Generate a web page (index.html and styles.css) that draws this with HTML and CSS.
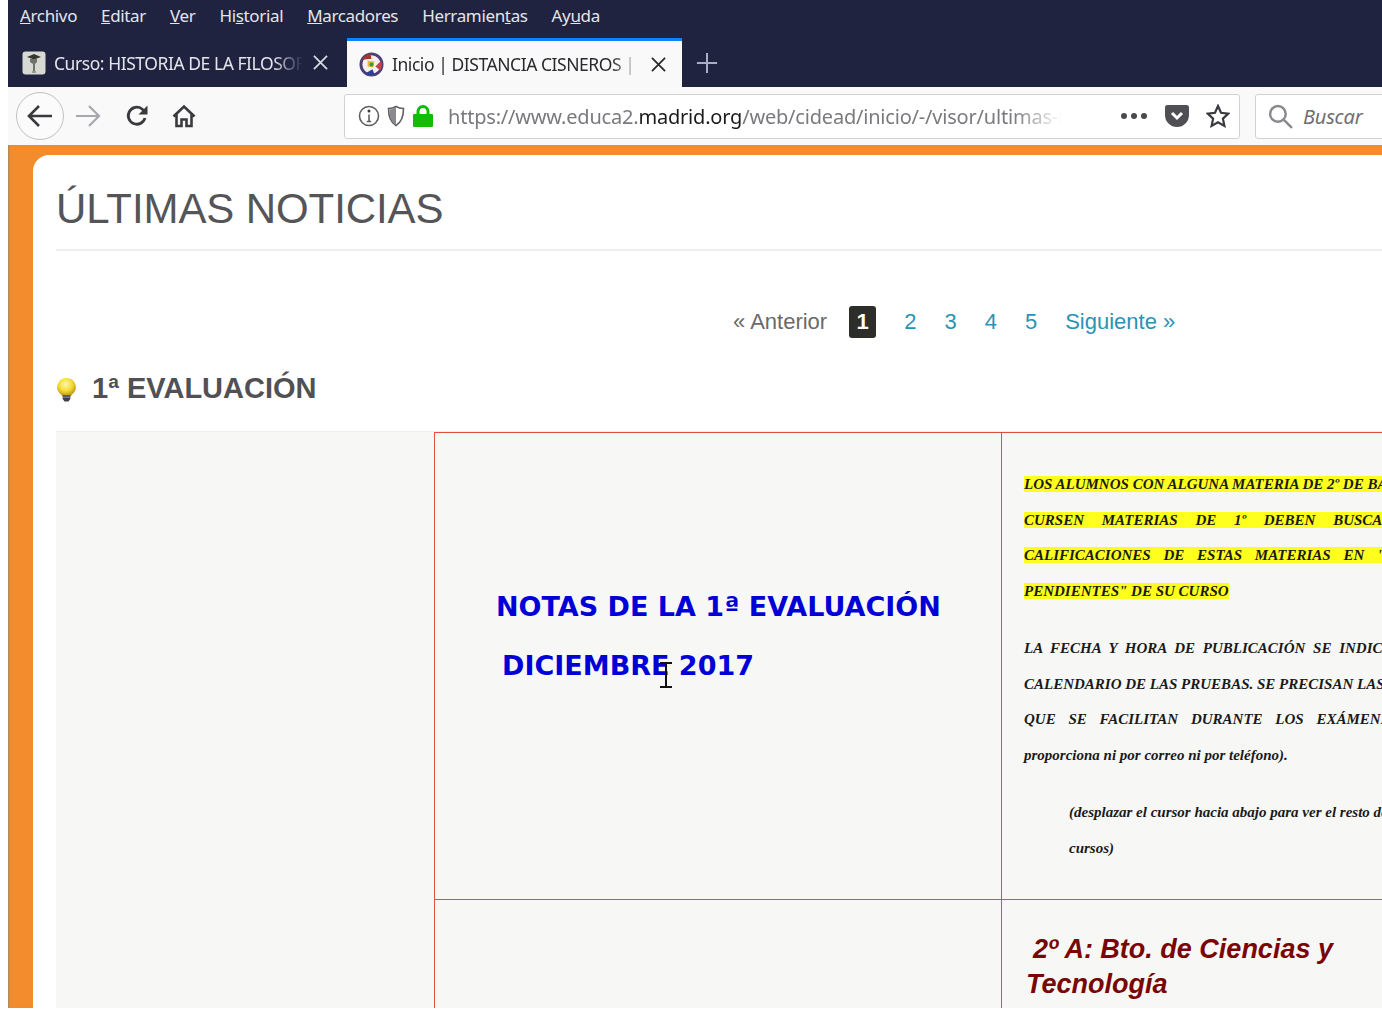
FILE: index.html
```html
<!DOCTYPE html>
<html lang="es">
<head>
<meta charset="utf-8">
<title>Inicio | DISTANCIA CISNEROS</title>
<link rel="stylesheet" href="styles.css">
</head>
<body>
<div class="window">
  <div class="menubar">
    <span><u>A</u>rchivo</span><span><u>E</u>ditar</span><span><u>V</u>er</span><span>Hi<u>s</u>torial</span><span><u>M</u>arcadores</span><span>Herramien<u>t</u>as</span><span>Ay<u>u</u>da</span>
  </div>
  <div class="tabbar">
    <div class="tab">
      <svg class="favicon" viewBox="0 0 24 24"><rect x="0.5" y="0.5" width="23" height="23" rx="3" fill="#d9d9d4"/><path d="M5 6l7-3 7 3-7 2.5z" fill="#33382f"/><path d="M8 8h7v3l-2 2v7h-2v-7l-3-2z" fill="#6f746a"/><path d="M10 20h4v2h-4z" fill="#9a9c94"/></svg>
      <span class="tab-title tab-title-a">Curso: HISTORIA DE LA FILOSOFÍA</span>
      <svg class="tab-close light" viewBox="0 0 16 16"><path d="M1 1l14 14M15 1L1 15"/></svg>
    </div>
    <div class="tab active">
      <svg class="favicon round" viewBox="0 0 26 26"><circle cx="13" cy="13" r="11" fill="#f5f0ee" stroke="#4b3f78" stroke-width="3"/><path d="M3 8a11 11 0 0 1 9-6l1 5z" fill="#a5342e"/><path d="M23 9a11 11 0 0 1-1 10l-5-4z" fill="#c9404a"/><path d="M7 22a11 11 0 0 0 9 1l-2-5z" fill="#2b3f9c"/><path d="M9 9l7 1-1 6-6-1z" fill="#e2b93a"/><circle cx="13" cy="13" r="2" fill="#3f8f58"/></svg>
      <span class="tab-title tab-title-b">Inicio | DISTANCIA CISNEROS | IES</span>
      <svg class="tab-close" viewBox="0 0 16 16"><path d="M1 1l14 14M15 1L1 15"/></svg>
    </div>
    <svg class="new-tab" viewBox="0 0 24 24"><path d="M12 1v22M1 12h22"/></svg>
  </div>
  <div class="navbar">
    <div class="back-btn"><svg class="ico-24" viewBox="0 0 26 24"><path d="M25 12H2M12 2L2 12l10 10"/></svg></div>
    <svg class="ico-fwd" viewBox="0 0 26 24"><path d="M1 12h23M14 2l10 10-10 10"/></svg>
    <svg class="ico-reload" viewBox="0 0 24 24"><path d="M20 14a8.500 8.500 0 1 1-3-9l3 2.500"/><path class="fill" d="M22.500 1.500v9h-9z"/></svg>
    <svg class="ico-home" viewBox="0 0 24 24"><path d="M1.500 12.500L12 2.500l10.500 10M4.500 10.500V22h5v-6.500h5V22h5V10.500"/></svg>
    <div class="urlbar">
      <svg class="ico-info" viewBox="0 0 22 22"><circle cx="11" cy="11" r="9.500"/><path d="M11 9.500V17M8.800 16.500h4.400" /><circle class="fill" cx="11" cy="6" r="1.500"/></svg>
      <svg class="ico-shield" viewBox="0 0 18 22"><path d="M9 1.500c2.500 1.500 5 2 7.500 2 0 8-1.500 13.500-7.500 17-6-3.500-7.500-9-7.500-17 2.500 0 5-.5 7.500-2z"/><path class="fill-g" d="M9 2v18c-5-3-6.500-8-6.500-15.500 2.500 0 4.500-1 6.500-2.500z"/></svg>
      <svg class="ico-lock" viewBox="0 0 20 22"><path class="lock-g" d="M1 9h18a1 1 0 0 1 1 1v11a1 1 0 0 1-1 1H1a1 1 0 0 1-1-1V10a1 1 0 0 1 1-1z"/><path class="lock-s" d="M5 10V6.500a5 5 0 0 1 10 0V10"/></svg>
      <span class="url">https://www.educa2.<b>madrid.org</b>/web/cidead/inicio/-/visor/ultimas-noticias</span>
      <span class="dots"><i></i><i></i><i></i></span>
      <svg class="ico-pocket" viewBox="0 0 24 22"><path class="fill-d" d="M2.500 0h19A2.500 2.500 0 0 1 24 2.500V10a12 12 0 0 1-24 0V2.500A2.500 2.500 0 0 1 2.500 0z"/><path class="chev" d="M7 8l5 5 5-5"/></svg>
      <svg class="ico-star" viewBox="0 0 24 24"><path d="M12 2l3 6.800 7.300.8-5.400 5 1.500 7.300L12 18.300l-6.400 3.600 1.500-7.300-5.400-5 7.300-.8z"/></svg>
    </div>
    <div class="searchbar">
      <svg class="ico-search" viewBox="0 0 24 24"><circle cx="9.500" cy="9.500" r="7.500"/><path d="M15 15l8 8"/></svg>
      <span class="search-text">Buscar</span>
    </div>
  </div>
  <div class="page">
    <div class="card">
      <h1 class="title">ÚLTIMAS NOTICIAS</h1>
      <div class="pagination">
        <span class="pg-prev">« Anterior</span>
        <span class="pg-cur">1</span>
        <a class="pg-link">2</a><a class="pg-link">3</a><a class="pg-link">4</a><a class="pg-link">5</a>
        <a class="pg-next">Siguiente »</a>
      </div>
      <h2 class="section">
        <svg class="bulb" viewBox="0 0 22 26"><defs><radialGradient id="b" cx="45%" cy="35%" r="60%"><stop offset="0" stop-color="#fff7a8"/><stop offset=".6" stop-color="#f4dc35"/><stop offset="1" stop-color="#c99f14"/></radialGradient></defs><path d="M11 1a9.500 9.500 0 0 1 6 17l-1.500 2h-9L5 18A9.500 9.500 0 0 1 11 1z" fill="url(#b)"/><path d="M7 19h8v4l-2 2.500H9L7 23z" fill="#3c4148"/><path d="M7 21h8" stroke="#9ba1a8"/></svg>
        <span>1ª EVALUACIÓN</span>
      </h2>
      <div class="grid">
        <div class="cell side"></div>
        <div class="cell notes">
          <p class="notes-line">NOTAS DE LA 1ª EVALUACIÓN</p>
          <p class="notes-line second">DICIEMBRE 2017</p>
          <svg class="ibeam" viewBox="0 0 14 26"><path d="M1 1h12M7 1v24M1 25h12"/></svg>
        </div>
        <div class="cell info">
          <p class="line"><mark>LOS ALUMNOS CON ALGUNA MATERIA DE 2º DE BACHILLERATO</mark></p>
          <p class="line wide-a"><mark>CURSEN MATERIAS DE 1º DEBEN BUSCAR LAS</mark></p>
          <p class="line wide-b"><mark>CALIFICACIONES DE ESTAS MATERIAS EN "NOTAS</mark></p>
          <p class="line"><mark>PENDIENTES" DE SU CURSO</mark></p>
          <p class="line gap wide-c">LA FECHA Y HORA DE PUBLICACIÓN SE INDICA EN EL</p>
          <p class="line">CALENDARIO DE LAS PRUEBAS. SE PRECISAN LAS NOTAS</p>
          <p class="line wide-d">QUE SE FACILITAN DURANTE LOS EXÁMENES (no se</p>
          <p class="line">proporciona ni por correo ni por teléfono).</p>
          <p class="line gap indent">(desplazar el cursor hacia abajo para ver el resto de los</p>
          <p class="line indent">cursos)</p>
        </div>
        <div class="cell side"></div>
        <div class="cell empty"></div>
        <div class="cell course">
          <p class="course-line first">2º A: Bto. de Ciencias y</p>
          <p class="course-line">Tecnología</p>
        </div>
      </div>
    </div>
  </div>
</div>
</body>
</html>
```
FILE: styles.css
```css
html, body { margin: 0; height: 100%; overflow: hidden; background: #fff; }
p, h1, h2 { margin: 0; }

.window {
  margin-left: 8px;
  height: 1008px;
  display: flex;
  flex-direction: column;
  overflow: hidden;
  font-family: "Noto Sans", sans-serif;
}

/* Browser chrome */
.menubar {
  height: 38px;
  flex: none;
  background: #1f2340;
  color: #e4e5ea;
  display: flex;
  align-items: center;
  gap: 24px;
  padding: 0 0 8px 12px;
  box-sizing: border-box;
  font-size: 17px;
  letter-spacing: -0.35px;
}
.tabbar {
  height: 49px;
  flex: none;
  background: #1f2340;
  display: flex;
  align-items: stretch;
}
.tab {
  width: 339px;
  display: flex;
  align-items: center;
  padding: 0 19px 0 14px;
  box-sizing: border-box;
  color: #e4e5ea;
  font-size: 17.500px;
  letter-spacing: -0.45px;
}
.tab.active {
  width: 335px;
  background: #f9f9fa;
  border-top: 3px solid #0a84ff;
  color: #2a2a2e;
  padding: 0 16px 0 12px;
}
.favicon { width: 24px; height: 24px; flex: none; margin-right: 8px; }
.favicon.round { width: 25px; height: 25px; }
.tab-title {
  flex: 1;
  white-space: nowrap;
  overflow: hidden;
  -webkit-mask-image: linear-gradient(to right, #000 88%, transparent 100%);
  mask-image: linear-gradient(to right, #000 88%, transparent 100%);
}
.tab-close { width: 15px; height: 15px; flex: none; margin-left: 10px; fill: none; stroke: #2a2a2e; stroke-width: 1.900; }
.tab-close.light { stroke: #d8d9e0; }
.new-tab { width: 22px; height: 22px; align-self: center; margin-left: 14px; fill: none; stroke: #a9adc2; stroke-width: 2.200; }

.navbar {
  height: 58px;
  flex: none;
  background: #f9f9fa;
  display: flex;
  align-items: center;
  padding-left: 8px;
  box-sizing: border-box;
}
.navbar svg { flex: none; fill: none; stroke: #3a3a3e; stroke-width: 2.200; }
.back-btn {
  width: 48px;
  height: 48px;
  box-sizing: border-box;
  border: 1px solid #c2c2c6;
  border-radius: 50%;
  background: #fbfbfc;
  display: flex;
  align-items: center;
  justify-content: center;
  flex: none;
}
.ico-24 { width: 26px; height: 24px; stroke-width: 2.600 !important; }
.navbar .ico-fwd { width: 26px; height: 24px; margin-left: 11px; stroke: #a8a8ac; }
.navbar .ico-reload { width: 24px; height: 24px; margin-left: 24px; stroke-width: 2.800; }
.navbar .ico-home { width: 24px; height: 26px; margin-left: 23px; stroke-width: 2.600; }
.navbar .fill { fill: #3a3a3e; stroke: none; }
.urlbar, .searchbar {
  height: 45px;
  box-sizing: border-box;
  background: #fff;
  border: 1px solid #d2d2d6;
  border-radius: 3px;
  display: flex;
  align-items: center;
  flex: none;
}
.urlbar { width: 896px; margin-left: 148px; padding: 0 10px 0 13px; }
.navbar .ico-info { width: 22px; height: 22px; stroke: #606064; stroke-width: 1.600; }
.navbar .ico-shield { width: 18px; height: 22px; margin-left: 7px; stroke: #606064; stroke-width: 1.600; }
.navbar .fill-g { fill: #8a8a8e; stroke: none; }
.navbar .ico-lock { width: 20px; height: 22px; margin-left: 8px; stroke: none; }
.navbar .lock-g { fill: #12bc00; stroke: none; }
.navbar .lock-s { stroke: #12bc00; stroke-width: 3; }
.url {
  width: 614px;
  flex: none;
  margin-left: 15px;
  white-space: nowrap;
  overflow: hidden;
  font-size: 20px;
  letter-spacing: -0.2px;
  color: #7a7a7e;
  -webkit-mask-image: linear-gradient(to right, #000 92%, transparent 100%);
  mask-image: linear-gradient(to right, #000 92%, transparent 100%);
}
.url b { font-weight: 400; color: #1a1a1c; }
.dots { display: flex; gap: 4px; margin-left: 59px; flex: none; }
.dots i { width: 6px; height: 6px; border-radius: 50%; background: #4a4a4e; }
.navbar .ico-pocket { width: 24px; height: 22px; margin-left: 18px; stroke: none; }
.navbar .fill-d { fill: #505054; stroke: none; }
.navbar .chev { stroke: #fff; stroke-width: 3; }
.navbar .ico-star { width: 24px; height: 24px; margin-left: 17px; stroke: #3a3a3e; stroke-width: 2.200; }
.searchbar { width: 300px; margin-left: 15px; padding-left: 12px; }
.navbar .ico-search { width: 25px; height: 25px; stroke: #8a8a8e; stroke-width: 2.400; }
.search-text { margin-left: 10px; font-size: 20px; font-style: italic; color: #6f6f73; letter-spacing: -0.2px; }

/* Page */
.page {
  flex: 1;
  min-height: 0;
  background: #f28c2c;
  padding: 10px 0 0 25px;
  box-shadow: inset 2px 0 2px -1px #9c8a6a;
}
.card {
  height: 100%;
  box-sizing: border-box;
  background: #fff;
  border-radius: 16px 0 0 0;
  padding: 0 0 0 23px;
  font-family: "Liberation Sans", Arial, sans-serif;
  overflow: hidden;
  width: 1500px;
}
.title {
  height: 96px;
  box-sizing: border-box;
  padding-top: 30px;
  border-bottom: 2px solid #eeeeec;
  font-size: 42px;
  line-height: 48px;
  font-weight: 400;
  color: #555558;
  letter-spacing: -0.1px;
}
.pagination {
  display: flex;
  align-items: center;
  height: 32px;
  margin-top: 55px;
  padding-left: 677px;
  font-size: 22px;
  color: #6a6a6a;
}
.pg-cur {
  width: 27px;
  height: 32px;
  margin-left: 22px;
  background: #2d2d2a;
  color: #fff;
  font-weight: 700;
  border-radius: 3px;
  display: flex;
  align-items: center;
  justify-content: center;
}
.pg-link { color: #2a93b5; margin-left: 28px; }
.pg-cur + .pg-link { margin-left: 28px; }
.pg-next { color: #2a93b5; margin-left: 28px; }
.section {
  display: flex;
  align-items: center;
  margin-top: 33px;
  height: 34px;
  font-size: 29px;
  font-weight: 700;
  color: #515154;
}
.bulb { width: 21px; height: 25px; margin: 2px 15px 0 0; flex: none; }
.grid {
  margin-top: 26px;
  display: grid;
  grid-template-columns: 378px 567px 520px;
  grid-template-rows: 467px 200px;
  background: #f7f8f6;
  border-top: 1px solid #eeeeec;
}
.cell { box-sizing: border-box; border-color: #e0503f; border-style: solid; border-width: 1px 0 0 1px; }
.cell.side { border-width: 0; }
.notes {
  position: relative;
  padding: 144px 0 0 61px;
  font-family: "DejaVu Sans", Verdana, sans-serif;
  font-size: 27px;
  font-weight: 700;
  color: #0000d6;
}
.notes-line { line-height: 59px; white-space: nowrap; }
.notes-line.second { padding-left: 6px; }
.ibeam {
  position: absolute;
  left: 224px;
  top: 229px;
  width: 14px;
  height: 26px;
  fill: none;
  stroke: #111;
  stroke-width: 2;
}
.info {
  padding: 34px 0 0 22px;
  font-family: "Liberation Serif", "Times New Roman", serif;
  font-size: 15px;
  font-style: italic;
  font-weight: 700;
  color: #1a1a1a;
}
.line { line-height: 35.500px; white-space: nowrap; }
.line mark { background: #ffff1e; color: inherit; }
.gap { margin-top: 22px; }
.indent { padding-left: 45px; }
.wide-a { word-spacing: 14px; }
.wide-b { word-spacing: 9px; }
.wide-c { word-spacing: 4px; }
.wide-d { word-spacing: 9px; }
.course {
  padding: 32px 0 0 24px;
  font-size: 27px;
  font-style: italic;
  font-weight: 700;
  color: #7a0505;
}
.course-line { line-height: 35px; white-space: nowrap; }
.course-line.first { padding-left: 7px; }
```
